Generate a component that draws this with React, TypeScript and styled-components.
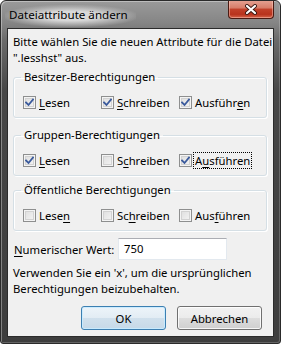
import React from 'react';
import styled, { createGlobalStyle } from 'styled-components';

const GlobalStyle = createGlobalStyle`
  html, body {
    margin: 0;
    padding: 0;
    background: #ffffff;
  }
  body {
    font-family: 'Noto Sans', 'Open Sans', sans-serif;
    font-size: 11.3px;
    color: #000;
  }
`;

const Window = styled.div`
  width: 281px;
  height: 344px;
  box-sizing: border-box;
  border: 1px solid #2a2a2a;
  border-radius: 6px 6px 3px 3px;
  background: linear-gradient(to bottom, #9a9a9a 0, #858585 22px, #6a6a6a 40px, #474747 90px, #3d3d3d 100%);
  box-shadow: inset 1px 1px 0 rgba(255, 255, 255, 0.35), inset -1px -1px 0 rgba(255, 255, 255, 0.2);
  display: flex;
  flex-direction: column;
  overflow: hidden;
`;

const TitleBar = styled.div`
  height: 27px;
  display: flex;
  align-items: flex-start;
  padding-left: 4px;
`;

const Title = styled.span`
  margin-top: 4px;
  padding: 2px 8px 4px 4px;
  line-height: 16px;
  font-size: 11.6px;
  background: radial-gradient(ellipse at center, rgba(230, 230, 230, 0.85) 30%, rgba(200, 200, 200, 0.4) 60%, rgba(160, 160, 160, 0) 75%);
`;

const CloseButton = styled.div`
  margin-left: auto;
  margin-right: 6px;
  margin-top: -1px;
  width: 46px;
  height: 19px;
  box-sizing: border-box;
  border: 1px solid #4a1a12;
  border-top: none;
  border-radius: 0 0 4px 4px;
  background: linear-gradient(to bottom, #e6a495 0, #d77c68 45%, #c2412a 50%, #b8331d 80%, #d5654a 100%);
  box-shadow: inset 0 0 0 1px rgba(255, 210, 200, 0.45);
  display: flex;
  align-items: center;
  justify-content: center;
`;

const Client = styled.div`
  margin: 0 6px 6px 6px;
  flex: 1;
  border: 1px solid #2b2b2b;
  background: #f0f0f0;
  padding: 5px 6px 6px 5px;
  display: flex;
  flex-direction: column;
`;

const Paragraph = styled.p<{ $top?: number }>`
  margin: ${({ $top }) => $top ?? 0}px 0 0 0;
  line-height: 16px;
  white-space: nowrap;
`;

const Group = styled.fieldset<{ $top: number }>`
  margin: ${({ $top }) => $top}px 0 0 0;
  padding: 0 6px 6px 9px;
  border: 1px solid #d5dfe5;
  border-radius: 3px;
  box-shadow: inset 1px 1px 0 #ffffff, 1px 1px 0 #ffffff;
  min-width: 0;
`;

const Legend = styled.legend`
  padding: 0 3px;
  margin-left: -2px;
  line-height: 16px;
`;

const CheckRow = styled.div`
  display: grid;
  grid-template-columns: 78px 78px auto;
  margin-top: 9px;
`;

const CheckItem = styled.label`
  display: flex;
  align-items: center;
  height: 17px;
  gap: 3px;
  white-space: nowrap;
`;

const Box = styled.span`
  width: 13px;
  height: 13px;
  box-sizing: border-box;
  border: 1px solid #8e8f8f;
  background: linear-gradient(135deg, #dcdcdc 0, #f6f6f6 100%);
  box-shadow: inset 0 0 0 1px #f4f4f4, inset 0 0 0 2px #d2d2d2;
  display: flex;
  align-items: center;
  justify-content: center;
  flex: none;
`;

const CheckText = styled.span<{ $focus?: boolean }>`
  line-height: 15px;
  padding: 0 1px;
  margin-left: -1px;
  outline: ${({ $focus }) => ($focus ? '1px dotted #000' : 'none')};
`;

const NumRow = styled.div`
  display: flex;
  align-items: center;
  margin-top: 7px;
`;

const NumLabel = styled.span`
  width: 104px;
  padding-left: 1px;
  white-space: nowrap;
`;

const NumInput = styled.div`
  width: 109px;
  height: 22px;
  box-sizing: border-box;
  background: #fff;
  border: 1px solid #e3e9ef;
  border-top-color: #abadb3;
  padding: 0 5px;
  line-height: 20px;
`;

const ButtonRow = styled.div`
  display: flex;
  justify-content: flex-end;
  gap: 11px;
  margin-top: auto;
  padding-right: 5px;
`;

const Button = styled.div<{ $default?: boolean }>`
  width: 85px;
  height: 24px;
  box-sizing: border-box;
  border-radius: 3px;
  border: 1px solid ${({ $default }) => ($default ? '#3c7fb1' : '#707070')};
  background: ${({ $default }) =>
    $default
      ? 'linear-gradient(to bottom, #edf4f9 0, #e2ecf4 50%, #d0e0ec 51%, #c6d9e8 100%)'
      : 'linear-gradient(to bottom, #f2f2f2 0, #ebebeb 50%, #dddddd 51%, #cfcfcf 100%)'};
  box-shadow: inset 0 0 0 1px ${({ $default }) => ($default ? 'rgba(200, 235, 255, 0.9)' : 'rgba(255, 255, 255, 0.8)')};
  display: flex;
  align-items: center;
  justify-content: center;
`;

const Key = styled.u`
  text-decoration-thickness: 1px;
  text-underline-offset: 2px;
`;

const CheckMark = () => (
  <svg width="9" height="9" viewBox="0 0 9 9">
    <path d="M1 4.5 L3.5 7 L8 1.5" fill="none" stroke="#3a5a9c" strokeWidth="1.8" strokeLinecap="square" />
  </svg>
);

type Part = { before: string; key: string; after: string };

const Labeled = ({ p }: { p: Part }) => (
  <>
    {p.before}
    <Key>{p.key}</Key>
    {p.after}
  </>
);

interface Item {
  label: Part;
  checked: boolean;
  focus?: boolean;
}

interface GroupData {
  title: string;
  top: number;
  items: Item[];
}

const groups: GroupData[] = [
  {
    title: 'Besitzer-Berechtigungen',
    top: 3,
    items: [
      { label: { before: '', key: 'L', after: 'esen' }, checked: true },
      { label: { before: '', key: 'S', after: 'chreiben' }, checked: true },
      { label: { before: 'Ausführ', key: 'e', after: 'n' }, checked: true },
    ],
  },
  {
    title: 'Gruppen-Berechtigungen',
    top: 9,
    items: [
      { label: { before: '', key: 'L', after: 'esen' }, checked: true },
      { label: { before: 'S', key: 'c', after: 'hreiben' }, checked: false },
      { label: { before: 'A', key: 'u', after: 'sführen' }, checked: true, focus: true },
    ],
  },
  {
    title: 'Öffentliche Berechtigungen',
    top: 6,
    items: [
      { label: { before: 'Lese', key: 'n', after: '' }, checked: false },
      { label: { before: 'Sc', key: 'h', after: 'reiben' }, checked: false },
      { label: { before: 'Aus', key: 'f', after: 'ühren' }, checked: false },
    ],
  },
];

export default function App() {
  return (
    <>
      <GlobalStyle />
      <Window>
        <TitleBar>
          <Title>Dateiattribute ändern</Title>
          <CloseButton>
            <svg width="14" height="11" viewBox="0 0 14 11">
              <path d="M3 2 L11 9 M11 2 L3 9" stroke="#3b1a14" strokeWidth="4" strokeLinecap="round" />
              <path d="M3 2 L11 9 M11 2 L3 9" stroke="#ffffff" strokeWidth="2.2" strokeLinecap="round" />
            </svg>
          </CloseButton>
        </TitleBar>
        <Client>
          <Paragraph>
            Bitte wählen Sie die neuen Attribute für die Datei
            <br />
            ".lesshst" aus.
          </Paragraph>
          {groups.map(g => (
            <Group key={g.title} $top={g.top}>
              <Legend>{g.title}</Legend>
              <CheckRow>
                {g.items.map((it, i) => (
                  <CheckItem key={i}>
                    <Box>{it.checked && <CheckMark />}</Box>
                    <CheckText $focus={it.focus}>
                      <Labeled p={it.label} />
                    </CheckText>
                  </CheckItem>
                ))}
              </CheckRow>
            </Group>
          ))}
          <NumRow>
            <NumLabel>
              <Key>N</Key>umerischer Wert:
            </NumLabel>
            <NumInput>750</NumInput>
          </NumRow>
          <Paragraph $top={5}>
            Verwenden Sie ein 'x', um die ursprünglichen
            <br />
            Berechtigungen beizubehalten.
          </Paragraph>
          <ButtonRow>
            <Button $default>OK</Button>
            <Button>Abbrechen</Button>
          </ButtonRow>
        </Client>
      </Window>
    </>
  );
}
